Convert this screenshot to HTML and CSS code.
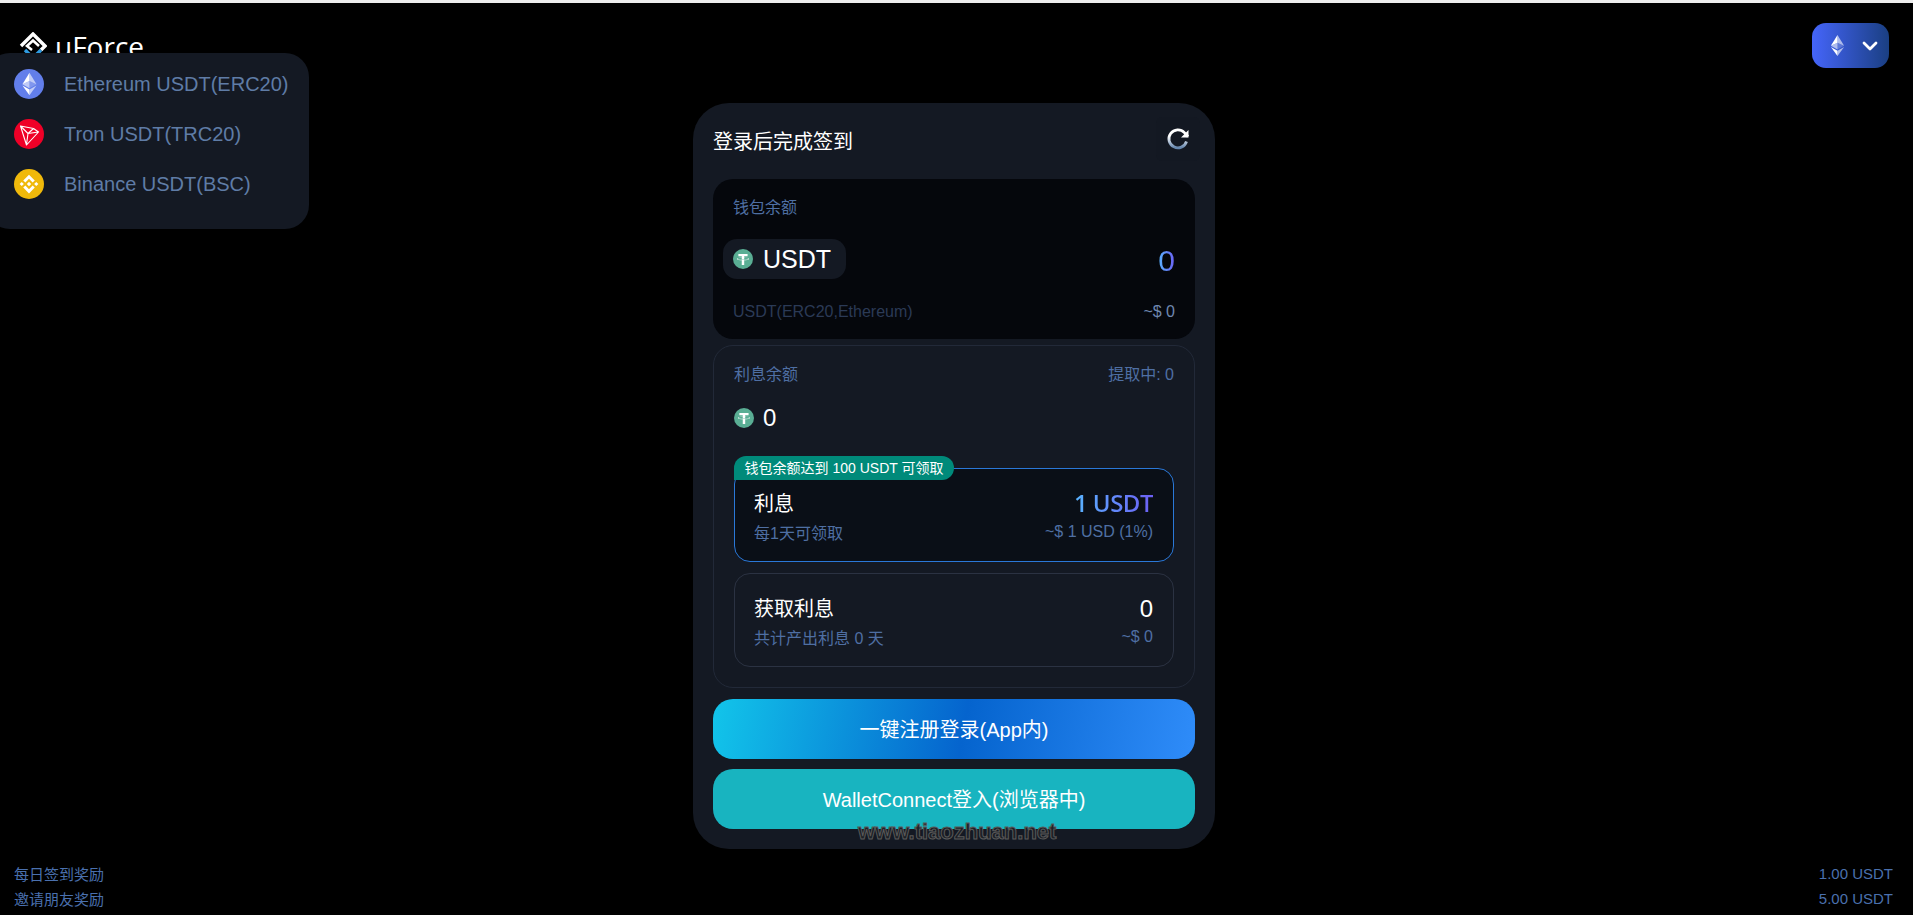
FILE: index.html
```html
<!DOCTYPE html>
<html lang="en">
<head>
    <meta charset="UTF-8">
    <title>uForce</title>
    <link rel="stylesheet" href="styles.css">
</head>
<body>
<svg class="defs" width="0" height="0">
    <symbol id="eth-mark" viewBox="0 0 32 32">
        <path fill="#fff" fill-opacity=".6" d="M16.498 4v8.87l7.497 3.35z"/>
        <path fill="#fff" d="M16.498 4L9 16.22l7.498-3.35z"/>
        <path fill="#fff" fill-opacity=".6" d="M16.498 21.968v6.027L24 17.616z"/>
        <path fill="#fff" d="M16.498 27.995v-6.028L9 17.616z"/>
        <path fill="#fff" fill-opacity=".2" d="M16.498 20.573l7.497-4.353-7.497-3.348z"/>
        <path fill="#fff" fill-opacity=".6" d="M9 16.22l7.498 4.353v-7.701z"/>
    </symbol>
    <symbol id="usdt-coin" viewBox="0 0 32 32">
        <circle cx="16" cy="16" r="16" fill="#5aae94"/>
        <path fill="#fff" fill-rule="evenodd" d="M17.922 17.383v-.002c-.11.008-.677.042-1.942.042-1.01 0-1.721-.03-1.971-.042v.003c-3.888-.171-6.79-.848-6.79-1.658 0-.809 2.902-1.486 6.79-1.66v2.644c.254.018.982.061 1.988.061 1.207 0 1.812-.05 1.925-.06v-2.643c3.88.173 6.775.85 6.775 1.658 0 .81-2.895 1.485-6.775 1.657m0-3.59v-2.366h5.414V7.819H8.595v3.608h5.414v2.365c-4.4.202-7.709 1.074-7.709 2.118 0 1.044 3.309 1.915 7.709 2.118v7.582h3.913v-7.584c4.393-.202 7.694-1.073 7.694-2.116 0-1.043-3.301-1.914-7.694-2.117"/>
    </symbol>
    <linearGradient id="refresh-grad" x1="0" y1="0" x2="0" y2="1">
        <stop offset="0.35" stop-color="#ffffff"/>
        <stop offset="1" stop-color="#6485ad"/>
    </linearGradient>
</svg>

<div class="app">
    <header class="topbar">
        <div class="logo">
            <svg class="logo-mark" viewBox="0 0 28 28">
                <path d="M2 14L14 2l12 12-4 4" fill="none" stroke="#fff" stroke-width="3.4"/>
                <path d="M20 14l-6-5.500-6 5.500 5 4" fill="none" stroke="#fff" stroke-width="2.6"/>
                <path d="M6 18l8 8 8-8" fill="none" stroke="#2f9be0" stroke-width="3.4"/>
            </svg>
            <span class="logo-text">uForce</span>
        </div>
        <button class="chain-btn">
            <svg class="chain-eth" viewBox="8 3 17 26"><use href="#eth-mark" width="32" height="32"/></svg>
            <svg class="chain-arrow" viewBox="0 0 16 10">
                <path d="M2 2l6 6 6-6" fill="none" stroke="#fff" stroke-width="2.8" stroke-linecap="round" stroke-linejoin="round"/>
            </svg>
        </button>
    </header>

    <!-- chain dropdown, lies over the logo -->
    <ul class="chain-menu">
        <li class="chain-item">
            <svg class="chain-icon" viewBox="0 0 32 32">
                <circle cx="16" cy="16" r="16" fill="#627eea"/>
                <use href="#eth-mark" width="32" height="32"/>
            </svg>
            Ethereum USDT(ERC20)
        </li>
        <li class="chain-item">
            <svg class="chain-icon" viewBox="0 0 30 30">
                <circle cx="15" cy="15" r="15" fill="#ef0027"/>
                <path d="M6.500 7l13 2.500 5 3.500-12 13zM6.500 7l7.500 7.500-1.500 11M14 14.500l10.500-1.500M14 14.500l5.500-5" fill="none" stroke="#fff" stroke-width="1.100" stroke-linejoin="round"/>
            </svg>
            Tron USDT(TRC20)
        </li>
        <li class="chain-item">
            <svg class="chain-icon" viewBox="0 0 32 32">
                <circle cx="16" cy="16" r="16" fill="#f0b90b"/>
                <path fill="#fff" d="M12.116 14.404L16 10.52l3.886 3.886 2.26-2.26L16 6l-6.144 6.144 2.26 2.26zM6 16l2.26-2.26L10.52 16l-2.26 2.26L6 16zm6.116 1.596L16 21.48l3.886-3.886 2.26 2.259L16 26l-6.144-6.144-.003-.003 2.263-2.257zM21.48 16l2.26-2.26L26 16l-2.26 2.26L21.48 16zm-3.188-.002h.002V16L16 18.294l-2.291-2.29-.004-.004.004-.003.401-.402.195-.195L16 13.706l2.293 2.293z"/>
            </svg>
            Binance USDT(BSC)
        </li>
    </ul>

    <main class="card">
        <div class="card-head">
            <span class="card-title">登录后完成签到</span>
            <span class="refresh">
                <svg class="refresh-icon" viewBox="0 0 24 24">
                    <path d="M20.500 14.500a9 9 0 1 1-2.100-8.900L22 9.500" fill="none" stroke="url(#refresh-grad)" stroke-width="2.800"/>
                    <path d="M22.500 3v7.500H15z" fill="#fff"/>
                </svg>
            </span>
        </div>

        <section class="wallet">
            <div class="label">钱包余额</div>
            <div class="wallet-row">
                <div class="token-pill">
                    <svg class="coin"><use href="#usdt-coin"/></svg>
                    USDT
                </div>
                <span class="wallet-amount grad-text">0</span>
            </div>
            <div class="wallet-foot">
                <span class="muted">USDT(ERC20,Ethereum)</span>
                <span class="usd">~$ 0</span>
            </div>
        </section>

        <section class="interest">
            <div class="interest-head">
                <span class="label">利息余额</span>
                <span class="label">提取中: 0</span>
            </div>
            <div class="interest-balance">
                <svg class="coin"><use href="#usdt-coin"/></svg>
                0
            </div>

            <div class="reward reward-active">
                <span class="badge">钱包余额达到 100 USDT 可领取</span>
                <div class="reward-row">
                    <span class="reward-title">利息</span>
                    <span class="reward-value grad-text">1 USDT</span>
                </div>
                <div class="reward-row reward-sub">
                    <span>每1天可领取</span>
                    <span>~$ 1 USD (1%)</span>
                </div>
            </div>

            <div class="reward">
                <div class="reward-row">
                    <span class="reward-title">获取利息</span>
                    <span class="reward-value">0</span>
                </div>
                <div class="reward-row reward-sub">
                    <span>共计产出利息 0 天</span>
                    <span>~$ 0</span>
                </div>
            </div>
        </section>

        <button class="action action-primary">一键注册登录(App内)</button>
        <button class="action action-teal">WalletConnect登入(浏览器中)</button>
        <span class="watermark">www.tiaozhuan.net</span>
    </main>

    <footer class="footer">
        <div class="footer-row"><span>每日签到奖励</span><span>1.00 USDT</span></div>
        <div class="footer-row"><span>邀请朋友奖励</span><span>5.00 USDT</span></div>
    </footer>
</div>
</body>
</html>
```

FILE: styles.css
```css
* {
    box-sizing: border-box;
}
body {
    margin: 0;
    background-color: #000;
    color: #fff;
    font-family: "Liberation Sans", "Noto Sans CJK SC", sans-serif;
}
.defs {
    position: absolute;
}
.app {
    position: relative;
    display: flex;
    flex-direction: column;
    height: 915px;
    overflow: hidden;
    border-top: 3px solid #eeeeee;
}

/* top bar */
.topbar {
    display: flex;
    justify-content: space-between;
    padding: 20px 24px 0 19px;
}
.logo {
    display: flex;
    align-items: flex-start;
    gap: 8px;
    height: 45px;
}
.logo-mark {
    width: 28px;
    height: 28px;
    margin-top: 9px;
}
.logo-text {
    font-family: "Open Sans", sans-serif;
    font-size: 28px;
    line-height: 40px;
    margin-top: 3px;
}
.chain-btn {
    display: flex;
    align-items: center;
    justify-content: space-between;
    width: 77px;
    height: 45px;
    padding: 0 11px 0 18px;
    border: none;
    border-radius: 14px;
    background: linear-gradient(90deg, #4565fa, #1a3f82);
}
.chain-eth {
    width: 15px;
    height: 23px;
}
.chain-arrow {
    width: 16px;
    height: 10px;
}

/* chain dropdown */
.chain-menu {
    position: absolute;
    left: -14px;
    top: 50px;
    width: 323px;
    height: 176px;
    margin: 0;
    padding: 16px 0 0 28px;
    list-style: none;
    border-radius: 24px;
    background-color: #141923;
}
.chain-item {
    display: flex;
    align-items: center;
    gap: 20px;
    height: 30px;
    margin-bottom: 20px;
    font-size: 20px;
    color: #5f7ca6;
}
.chain-icon {
    width: 30px;
    height: 30px;
}

/* main card */
.card {
    position: relative;
    width: 522px;
    height: 746px;
    margin: 35px 0 0 693px;
    padding: 14px 20px 0;
    border-radius: 36px;
    background-color: #141923;
}
.card-head {
    display: flex;
    align-items: center;
    justify-content: space-between;
    height: 44px;
    margin-bottom: 18px;
}
.card-title {
    font-size: 20px;
    padding-top: 2px;
}
.refresh {
    display: flex;
    align-items: center;
    justify-content: center;
    width: 44px;
    height: 44px;
    margin-right: -5px;
    border-radius: 6px;
    background-color: #131822;
}
.refresh-icon {
    width: 24px;
    height: 24px;
}
.label {
    font-size: 16px;
    line-height: 24px;
    color: #4f6fa3;
}
.coin {
    width: 20px;
    height: 20px;
    flex: none;
}
.grad-text {
    background: linear-gradient(90deg, #58b4ff, #6c5ff5);
    -webkit-background-clip: text;
    background-clip: text;
    color: transparent;
}

/* wallet balance */
.wallet {
    height: 160px;
    padding: 17px 20px 0;
    border-radius: 20px;
    background-color: #05070c;
}
.wallet-row {
    display: flex;
    align-items: center;
    justify-content: space-between;
    margin: 19px 0 21px;
}
.token-pill {
    display: flex;
    align-items: center;
    gap: 10px;
    height: 40px;
    margin-left: -10px;
    padding: 0 15px 0 10px;
    border-radius: 14px;
    background-color: #141923;
    font-size: 25px;
}
.wallet-amount {
    padding-top: 4px;
    font-size: 30px;
}
.wallet-foot {
    display: flex;
    justify-content: space-between;
    font-size: 16px;
    line-height: 24px;
}
.muted {
    color: #2b3a56;
}
.usd {
    color: #6f88b0;
}

/* interest balance */
.interest {
    height: 343px;
    margin-top: 6px;
    padding: 17px 20px 0;
    border: 1px solid #222938;
    border-radius: 20px;
}
.interest-head {
    display: flex;
    justify-content: space-between;
}
.interest-balance {
    display: flex;
    align-items: center;
    gap: 9px;
    height: 30px;
    margin-top: 16px;
    font-size: 24px;
}
.reward {
    position: relative;
    height: 94px;
    margin-top: 11px;
    padding: 18px 20px 0 19px;
    border: 1px solid #2b3242;
    border-radius: 16px;
}
.reward-active {
    margin-top: 35px;
    border-color: #2a78d8;
    background-color: #0a0f17;
}
.badge {
    position: absolute;
    left: -1px;
    top: -13px;
    width: 220px;
    height: 24px;
    border-radius: 12px 12px 12px 0;
    background-color: #008a7a;
    font-size: 14px;
    line-height: 24px;
    text-align: center;
}
.reward-row {
    display: flex;
    justify-content: space-between;
    align-items: center;
    height: 30px;
}
.reward-title {
    font-size: 20px;
}
.reward-value {
    padding-top: 3px;
    font-size: 24px;
}
.reward-active .reward-value {
    padding-top: 0;
    font-family: "Open Sans", sans-serif;
    font-weight: 600;
    letter-spacing: -0.5px;
}
.reward-sub {
    height: 24px;
    margin-top: 3px;
    font-size: 16px;
    color: #4f6fa3;
}

/* buttons */
.action {
    display: block;
    width: 100%;
    height: 60px;
    padding-bottom: 3px;
    border: none;
    border-radius: 20px;
    color: #fff;
    font-family: inherit;
    font-size: 20px;
}
.action-primary {
    margin-top: 11px;
    background: linear-gradient(100deg, #12c5ea 0%, #0564ce 52%, #2f8cf9 100%);
}
.action-teal {
    margin-top: 10px;
    background-color: #18b4c0;
}
.watermark {
    position: absolute;
    left: 165px;
    top: 714px;
    font-size: 22px;
    font-weight: bold;
    line-height: 30px;
    color: #1d2026;
    -webkit-text-stroke: 1px #5a5a5a;
}

/* footer */
.footer {
    margin-top: auto;
    padding: 0 20px 4px 14px;
    font-size: 15px;
    color: #4a70ae;
}
.footer-row {
    display: flex;
    justify-content: space-between;
    align-items: center;
    height: 25px;
}
```
